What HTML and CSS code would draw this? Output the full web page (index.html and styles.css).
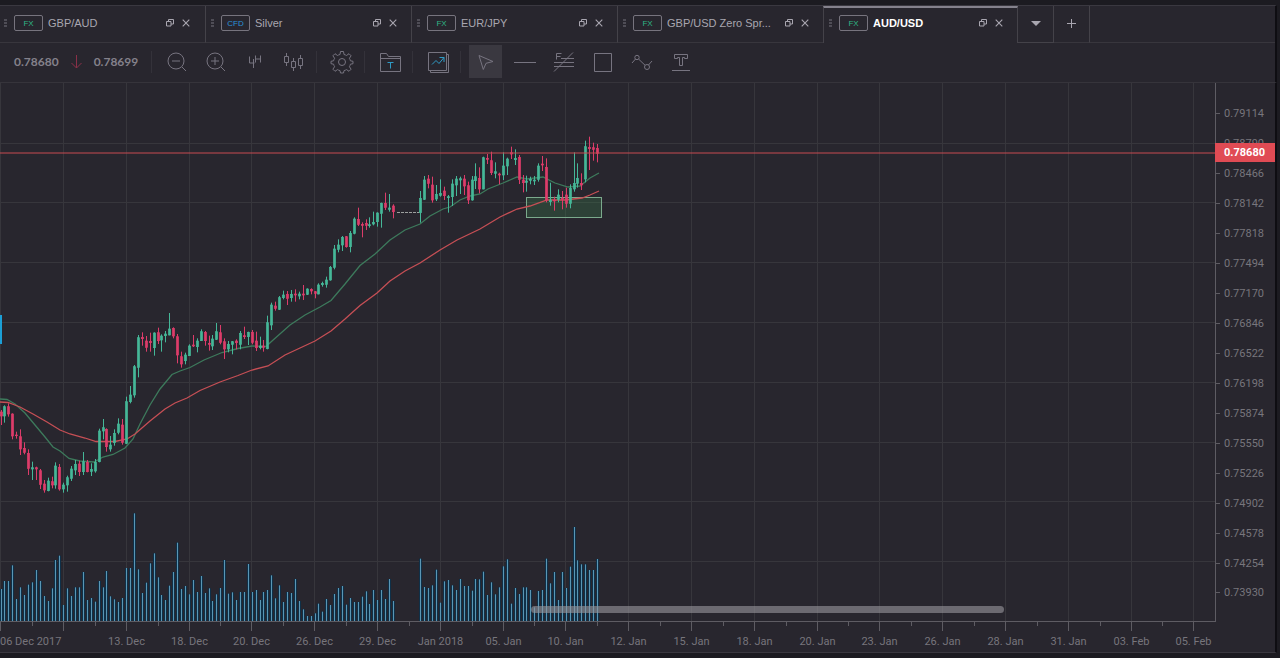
FILE: index.html
```html
<!DOCTYPE html>
<html lang="en">
<head>
<meta charset="utf-8">
<title>AUD/USD</title>
<link rel="stylesheet" href="styles.css">
</head>
<body>
<svg class="defs" aria-hidden="true">
  <symbol id="i-grip" viewBox="0 0 3 8"><path d="M0 1h3M0 4h3M0 7h3" stroke="#77747f"/></symbol>
  <symbol id="i-pop" viewBox="0 0 8 8"><path d="M.5 2.5h4.500v4.500H.5zM2.500 2.500V.5h5v4.500H5" fill="none" stroke="currentColor"/></symbol>
  <symbol id="i-x" viewBox="0 0 8 8"><path d="M.7.7l6.600 6.600M7.300.7L.7 7.300" fill="none" stroke="currentColor" stroke-width="1.100"/></symbol>
</svg>
<div class="window">
  <nav class="tabs" aria-label="Instruments">
    <div class="tab">
      <svg class="grip"><use href="#i-grip"/></svg><span class="kind">FX</span><span class="name">GBP/AUD</span>
      <button class="mini" aria-label="Detach GBP/AUD"><svg><use href="#i-pop"/></svg></button><button class="mini" aria-label="Close GBP/AUD"><svg><use href="#i-x"/></svg></button>
    </div>
    <div class="tab">
      <svg class="grip"><use href="#i-grip"/></svg><span class="kind cfd">CFD</span><span class="name">Silver</span>
      <button class="mini" aria-label="Detach Silver"><svg><use href="#i-pop"/></svg></button><button class="mini" aria-label="Close Silver"><svg><use href="#i-x"/></svg></button>
    </div>
    <div class="tab">
      <svg class="grip"><use href="#i-grip"/></svg><span class="kind">FX</span><span class="name">EUR/JPY</span>
      <button class="mini" aria-label="Detach EUR/JPY"><svg><use href="#i-pop"/></svg></button><button class="mini" aria-label="Close EUR/JPY"><svg><use href="#i-x"/></svg></button>
    </div>
    <div class="tab">
      <svg class="grip"><use href="#i-grip"/></svg><span class="kind">FX</span><span class="name">GBP/USD Zero Spr...</span>
      <button class="mini" aria-label="Detach GBP/USD"><svg><use href="#i-pop"/></svg></button><button class="mini" aria-label="Close GBP/USD"><svg><use href="#i-x"/></svg></button>
    </div>
    <div class="tab active">
      <svg class="grip"><use href="#i-grip"/></svg><span class="kind">FX</span><span class="name">AUD/USD</span>
      <button class="mini" aria-label="Detach AUD/USD"><svg><use href="#i-pop"/></svg></button><button class="mini" aria-label="Close AUD/USD"><svg><use href="#i-x"/></svg></button>
    </div>
    <button class="tab-btn" aria-label="All tabs"><svg width="10" height="5" viewBox="0 0 10 5"><path d="M0 0h10L5 5z" fill="#a9a6b0"/></svg></button>
    <button class="tab-btn add" aria-label="Add tab"><svg width="9" height="9" viewBox="0 0 9 9"><path d="M4.500 0v9M0 4.500h9" stroke="#a9a6b0"/></svg></button>
    <div class="tab-rest"></div>
  </nav>

  <div class="toolbar">
    <div class="quote">
      <span>0.78680</span>
      <svg width="11" height="14" viewBox="0 0 11 14"><path d="M5.500 0v13M.5 8l5 5 5-5" fill="none" stroke="#8a3048"/></svg>
      <span>0.78699</span>
    </div>
    <i class="sep first"></i>
    <button class="tool" aria-label="Zoom out"><svg viewBox="0 0 24 24"><circle cx="11" cy="11" r="8"/><path d="M7 11h8M17 17l4 4"/></svg></button>
    <button class="tool" aria-label="Zoom in"><svg viewBox="0 0 24 24"><circle cx="11" cy="11" r="8"/><path d="M7 11h8M11 7v8M17 17l4 4"/></svg></button>
    <button class="tool" aria-label="Interval 4H"><svg viewBox="0 0 24 24"><path d="M6.500 6.500v6.500h5M10.500 9v9M12.500 5.500v7M12.500 9h5M17.500 5.500v7"/></svg></button>
    <button class="tool" aria-label="Chart type"><svg viewBox="0 0 24 24"><path d="M2.500 6.500h4v6h-4zM4.500 3v3.500M4.500 12.500v3.500M9.500 11.500h4v6h-4zM11.500 8v3.500M11.500 17.500V21M16.500 8.500h4v7h-4zM18.500 5v3.500M18.500 15.500V19"/></svg></button>
    <i class="sep"></i>
    <button class="tool" aria-label="Settings"><svg viewBox="0 0 24 24"><circle cx="12" cy="12" r="3.500"/><path d="M10.500 1.500h3l.5 3q1.400.3 2.500 1l2.500-1.800 2.100 2.100L19.400 8.300q.7 1.100 1 2.500l2.600.5v2.400l-2.600.5q-.3 1.400-1 2.500l1.700 2.500-2.100 2.100-2.500-1.700q-1.100.7-2.500 1l-.5 2.400h-3l-.5-2.400q-1.400-.3-2.500-1L5 21.300l-2.100-2.100 1.700-2.500q-.7-1.100-1-2.500L1 13.700v-2.400l2.600-.5q.3-1.400 1-2.500L2.900 5.800 5 3.700l2.500 1.800q1.100-.7 2.500-1z"/></svg></button>
    <i class="sep"></i>
    <button class="tool" aria-label="Templates"><svg viewBox="0 0 24 24"><path d="M2.500 21.500v-18h6l2 3h12v15zM2.500 8.500h20"/><path class="blue" d="M9.500 12.500h6M12.500 12.500v6"/></svg></button>
    <i class="sep"></i>
    <button class="tool" aria-label="New chart"><svg viewBox="0 0 24 24"><path d="M2.500 2.500h18v18h-18zM4.500 20.500v2h18v-18h-2"/><path class="blue" d="M6 14.500l4-4 3 3 5-6M13.500 7.500H18V12"/></svg></button>
    <i class="sep"></i>
    <button class="tool on" aria-label="Pointer"><svg viewBox="0 0 24 24"><path d="M5 5.500l14 6-7 1.800-2.700 6.200z"/></svg></button>
    <button class="tool" aria-label="Line"><svg viewBox="0 0 24 24"><path d="M1 12.500h22"/></svg></button>
    <button class="tool" aria-label="Fibonacci"><svg viewBox="0 0 24 24"><path d="M4.500 9.500v-6h5M4.500 6.500h4M9 8.500h13M2 12.500h20M2 16.500h20M2 21.500l19-19"/></svg></button>
    <button class="tool" aria-label="Rectangle"><svg viewBox="0 0 24 24"><path d="M3.500 3.500h17v18h-17z"/></svg></button>
    <button class="tool" aria-label="Polyline"><svg viewBox="0 0 24 24"><circle cx="7" cy="7.500" r="2.200"/><circle cx="17" cy="17" r="2.500"/><path d="M2 13l3.500-4M8.700 9.200l6.300 6M18.500 15l3.500-4"/></svg></button>
    <button class="tool" aria-label="Text"><svg viewBox="0 0 24 24"><path d="M5.500 4.500h13v4h-3v-1h-2v8h-3v-8h-2v1h-3zM3 20.500h18"/></svg></button>
  </div>

  <main class="chart">
    <div class="plot">
      <svg id="plot" class="plot-svg" role="img" aria-label="AUD/USD 4 hour chart"></svg>
      <div class="scroll"></div>
      <div class="edge"></div>
    </div>
    <div class="prices">
      <ol class="price-list" id="prices"></ol>
      <strong class="price-now">0.78680</strong>
    </div>
  </main>
</div>
<script src="chart.js"></script>
</body>
</html>
```

FILE: styles.css
```css
* { box-sizing: border-box; }
body {
  margin: 0;
  background: #1c1b21;
  color: #a9a6b0;
  font-family: "Liberation Sans", Arial, sans-serif;
  font-size: 11px;
}
button { padding: 0; border: 0; background: none; color: inherit; font: inherit; }
.defs { position: absolute; width: 0; height: 0; }

.window {
  display: flex;
  flex-direction: column;
  min-height: 100vh;
  padding: 5px 0;
}
.tabs, .toolbar, .chart {
  margin-right: 3px;
  background: #28262e;
  border-right: 2px solid #0e0d12;
}

.tabs { display: flex; height: 38px; border-top: 1px solid #3a3840; }
.tab {
  display: flex;
  align-items: center;
  flex: 0 0 206px;
  padding: 0 14px 2px 5px;
  border-right: 1px solid #444249;
  border-bottom: 1px solid #38363d;
}
.tab:first-child { padding-left: 4px; padding-right: 15px; }
.tab.active {
  flex-basis: 195px;
  padding: 0 14px 2px 5px;
  border-top: 2px solid #85828d;
  border-left: 1px solid #444249;
  border-bottom: 0;
  margin-left: -1px;
}
.tab.active { padding-bottom: 5px; }
.grip { width: 3px; height: 8px; margin-right: 7px; }
.kind {
  width: 29px;
  height: 16px;
  margin-right: 5px;
  border: 1px solid #77747e;
  border-radius: 2px;
  color: #2fb585;
  font-size: 8px;
  line-height: 15px;
  text-align: center;
}
.kind.cfd { color: #2a93d8; }
.name { flex: 1; white-space: nowrap; }
.active .name { color: #fff; font-weight: bold; }
.mini { width: 8px; height: 8px; margin-left: 8px; color: #a9a6b0; line-height: 0; }
.mini svg { width: 8px; height: 8px; }
.tab-btn {
  display: flex;
  align-items: center;
  justify-content: center;
  width: 36px;
  padding-bottom: 2px;
  border-right: 1px solid #444249;
  border-bottom: 1px solid #444249;
}
.tab-btn.add { border-bottom-color: #38363d; }
.tab-rest { flex: 1; border-bottom: 1px solid #38363d; }

.toolbar {
  display: flex;
  align-items: center;
  gap: 6px;
  height: 40px;
  padding: 0 0 2px 14px;
  border-bottom: 1px solid #36343b;
}
.quote {
  display: flex;
  align-items: center;
  gap: 12px;
  width: 135px;
  color: #84818b;
  font: bold 12px Lato, sans-serif;
}
.sep { width: 3px; height: 22px; border-left: 1px solid #34323a; }
.sep.first { margin-left: -4px; }
.tool {
  display: flex;
  align-items: center;
  justify-content: center;
  width: 33px;
  height: 33px;
}
.tool.on { background: #3a3840; }
.tool svg { width: 24px; height: 24px; fill: none; stroke: #777480; }
.tool .blue { stroke: #2f9ac4; }

.chart { display: flex; flex: 1; min-height: 570px; border-bottom: 1px solid #3a3840; }
.plot { position: relative; flex: 1; min-width: 0; }
.plot-svg { display: block; width: 100%; height: 569px; font: 11px Roboto, sans-serif; }
.grid { stroke: #37363c; }
.axis { stroke: #5e5c63; fill: none; }
.time { fill: #77757c; text-anchor: middle; }
.time.start { text-anchor: start; }
.vol-halo { stroke: #0f3048; stroke-width: 3; }
.vol { stroke: #5a96b4; }
.up { stroke: #45b798; fill: #45b798; }
.down { stroke: #dd3c6a; fill: #dd3c6a; }
.ma { fill: none; stroke-width: 1.3; }
.fast { stroke: #3d7a5c; }
.slow { stroke: #c64f55; }
.now { stroke: #c74a50; }
.flat { stroke: #9da09f; stroke-dasharray: 3 1; }
.zone { fill: #3c8a50; fill-opacity: .28; stroke: #7ba98c; }
.scroll {
  position: absolute;
  left: 43.7%;
  right: 17.4%;
  top: 523px;
  height: 7px;
  border-radius: 4px;
  background: rgba(150, 148, 155, .62);
}
.edge { position: absolute; left: 0; top: 232px; width: 2px; height: 29px; background: #1c9fd6; }

.prices {
  position: relative;
  width: 60px;
  height: 539px;
  padding: 16px 0 14px;
  border-left: 1px solid #5e5c63;
  color: #77757c;
  font: 11px Roboto, sans-serif;
}
.price-list {
  display: flex;
  flex-direction: column;
  height: 100%;
  margin: 0;
  padding: 0;
  list-style: none;
}
.price-list li { display: flex; flex: 1; align-items: center; }
.price-list li::before { content: ""; width: 4px; height: 1px; margin-right: 4px; background: #5e5c63; }
.price-now {
  position: absolute;
  left: -1px;
  right: 0;
  top: 60px;
  padding-left: 9px;
  background: #e04b54;
  color: #fff;
  line-height: 19px;
}
```

FILE: chart.js
```js
// Drawing units are thirds of a pixel for candles and volumes.
const STEP = 3.925, X0 = 1, TOP = 83, FLOOR = 622;
const svg = document.getElementById('plot');
const xAt = i => X0 + STEP * i;
const out = [];
const line = (x1, y1, x2, y2, c) => out.push(`<line x1="${x1}" y1="${y1}" x2="${x2}" y2="${y2}" class="${c}"/>`);
const snap = v => Math.floor(v) + 0.5;

// [first index, vertical base, rows of "direction high open-top open-bottom low"]
const candles = [
  [0, 900, `r330 336 348 375,g316 320 348 368,r310 320 342 350,r340 342 408 418,r395 405 407 416,r388 410 447 465,r427 445 457 463,r448 460 505 525,g485 503 507 540,r500 503 507 540,r507 512 553 567,r540 552 570 578,g533 543 572 574,r530 545 555 565,g487 498 555 566,r492 502 567 572,g548 555 567 578,g527 533 555 575,g498 507 535 543,g480 493 510 525,r482 492 515 528,g456 485 515 525,r480 487 515 517,g490 508 514 528,g477 487 513 518,g386 393 485 487,g357 383 393 418,r385 388 440 455,g408 435 447 455,g388 400 428 437,g355 372 397 403,r357 375 427 434,g290 305 430 432,g258 285 305 310,g195 200 285 293,g105 113 202 232,r97 112 116 137,r108 123 142 155,r98 124 128 155,g97 99 143 167,r83 98 122 132,g103 108 120 155,g93 102 107 127,g39 87 105 106,r82 85 108 115,r102 110 165 190,r155 170 192 203,g158 165 182 193,g133 138 167 168,r105 135 138 141,g115 123 140 157,g88 95 122 123,r93 97 122 137,r107 130 133 152,g105 117 138 150`],
  [55, 660, `g309 335 358 360,r315 338 367 373,r355 365 387 417,g363 373 387 397,g363 365 373 403,r358 363 368 388,g333 340 373 388,r320 347 350 357,g335 337 350 375,r330 337 367 373,r335 363 383 393,g350 378 383 388,r360 378 382 395,g287 308 386 388,g248 255 315 330,r245 258 265 272,g228 233 268 270,g212 225 233 238,r213 223 235 255,g210 223 233 245,r208 222 225 245,g215 222 228 238,r195 222 225 240,g205 207 223 225,r205 208 213 223,r213 215 220 235,g190 195 222 223,g185 190 194 200,g170 180 193 203,g138 142 180 182,g75 87 142 148,g58 75 88 97,g48 52 75 93,r48 50 80 83,g33 40 80 97`],
  [90, 540, `g112 117 160 163,r83 118 133 138,r127 133 136 172,r118 130 136 150,g112 134 137 143,g95 127 132 136,g97 99 125 140,g68 70 100 143,r38 70 82 90,g42 84 88 95,r73 78 95 115`],
  [107, 360, `g213 235 278 308,g168 180 238 240,r165 177 190 205,r170 195 240 248,g195 223 237 243,g178 220 226 230,r200 213 227 240,g225 230 233 278,g178 192 230 258,g168 177 195 228,g170 176 180 222,r165 177 198 225,r185 197 240 252,g168 180 240 242,g130 170 182 207,r142 175 207 220,g110 113 207 208,r102 115 118 132,r95 122 158 165,g127 155 160 175,r158 162 165 193,g97 138 165 180,g113 117 138 165,r80 98 102 117,g88 115 119 135,r105 112 178 192,r165 180 188 217,g167 183 187 215,g170 178 181 193,g168 180 183 195,g130 138 178 185,r108 132 135 153,r115 142 240 247,g188 240 245 257,r230 240 243 272,g208 225 238 247,r213 235 238 268,r203 225 250 263,g193 205 250 265,g97 190 207 215,g130 175 190 203,r160 190 195 210,g62 80 177 187,r50 82 86 150,r68 83 88 122,r72 85 100 127`]
];
const volumes = [
  [0, '267 243 243 196 297 262 285 254 247 210 243 288 303 265 180 167 315 265 288 262 262 216 300 294 305 243 262 213 289 298 306 294 204 204 40 208 279 248 190 160 232 285 300 257 216 128 267 258 283 240 276 228 279 265 303 283 264 180 281 277 300 276 276 192 276 270 300 276 270 226 295 256 306 276 279 237 303 328 348 348 340 311 335 297 315 282 264 258 314 294 306 306 290 274 312 270 300 270 297 237 303'],
  [107, '176 261 264 256 209 308 244 240 256 270 237 258 258 272 237 238 215 285 247 283 262 199 178 311 264 282 262 262 270 322 273 270 176 250 216 300 216 264 200 81 181 193 193 210 210 177']
];
const fast = '0,399 7,399.500 15,404 25,413 35,425 45,437 53,447 60,451 69,458.500 80,461 94,462 103,457 113,454.500 125,448 133,439 140,424 150,405 160,389 172,374.500 180,371 190,367.500 204,360 222,352.500 238,348.500 252,346 266,346.500 272,341 290,325 305,315 320,307 331,300.500 345,284 360,265.500 375,254 390,240 405,230 420,224 430,216 443,209 450,207 460,200 470,196 480,194 488,189 503,183 517,177 527,179 543,177 555,183 568,187 580,186 590,178 599,173';
const slow = '0,402 8,402.500 20,407 33,414 47,422 60,430 70,434 85,438 96,441.500 115,441.500 127,439 135,434 150,421 165,409 175,403 187,398 200,390.500 220,382 238,375.500 252,370 268,366 285,355 300,348 315,341 331,331 345,319 360,305.500 377,293 390,281 405,271 420,263 440,250 457,240 480,229 500,217 517,209 530,206 547,200 565,200 582,198 590,195 599,191';
const dates = ['06 Dec 2017', '', '13. Dec', '18. Dec', '20. Dec', '26. Dec', '29. Dec', 'Jan 2018', '05. Jan', '10. Jan', '12. Jan', '15. Jan', '18. Jan', '20. Jan', '23. Jan', '26. Jan', '28. Jan', '31. Jan', '03. Feb', '05. Feb'];

dates.forEach((d, k) => {
  const x = snap(xAt(k * 16) - 0.3);
  line(x, TOP, x, FLOOR, 'grid');
});
for (let k = 0; k < 8; k++) {
  const y = snap(143 + k * 59.8);
  line(0, y, '100%', y, 'grid');
}
out.push('<rect x="526.500" y="197.500" width="75" height="20" class="zone"/>');
for (const c of ['vol-halo', 'vol']) {
  for (const [start, row] of volumes) {
    row.split(' ').forEach((v, k) => {
      const x = Math.round(xAt(start + k) - 0.5) + 0.5;
      line(x, 500 + v / 3, x, FLOOR, c);
    });
  }
}
out.push(`<polyline points="${fast}" class="ma fast"/><polyline points="${slow}" class="ma slow"/>`);
for (const [start, base, rows] of candles) {
  rows.split(',').forEach((r, k) => {
    const c = r[0] === 'g' ? 'up' : 'down';
    const [h, t, b, l] = r.slice(1).split(' ').map(v => (+v + base) / 3);
    const x = Math.round(xAt(start + k) - 0.5) + 0.5;
    line(x, h, x, l, c);
    out.push(`<rect x="${x - 1}" y="${t}" width="2" height="${b - t}" stroke-width="0.700" class="${c}"/>`);
  });
}
line(397, 212.5, 419, 212.5, 'flat');
line(0, 153, '100%', 153, 'now');
line(0, FLOOR - 0.5, '100%', FLOOR - 0.5, 'axis');
dates.forEach((d, k) => {
  const x = snap(xAt(k * 16) - 0.3), m = snap(xAt(k * 16 + 8));
  line(x, FLOOR, x, FLOOR + 9, 'axis');
  if (k < 19) line(m, FLOOR, m, FLOOR + 4, 'axis');
  out.push(k ? `<text x="${x}" y="645" class="time">${d}</text>` : `<text x="0" y="645" class="time start">${d}</text>`);
});
svg.innerHTML = `<g transform="translate(0 ${-TOP})">${out.join('')}</g>`;

const list = document.getElementById('prices');
for (let k = 0; k < 17; k++) {
  const li = document.createElement('li');
  li.textContent = ((79114 - 324 * k) / 100000).toFixed(5);
  list.append(li);
}
```
